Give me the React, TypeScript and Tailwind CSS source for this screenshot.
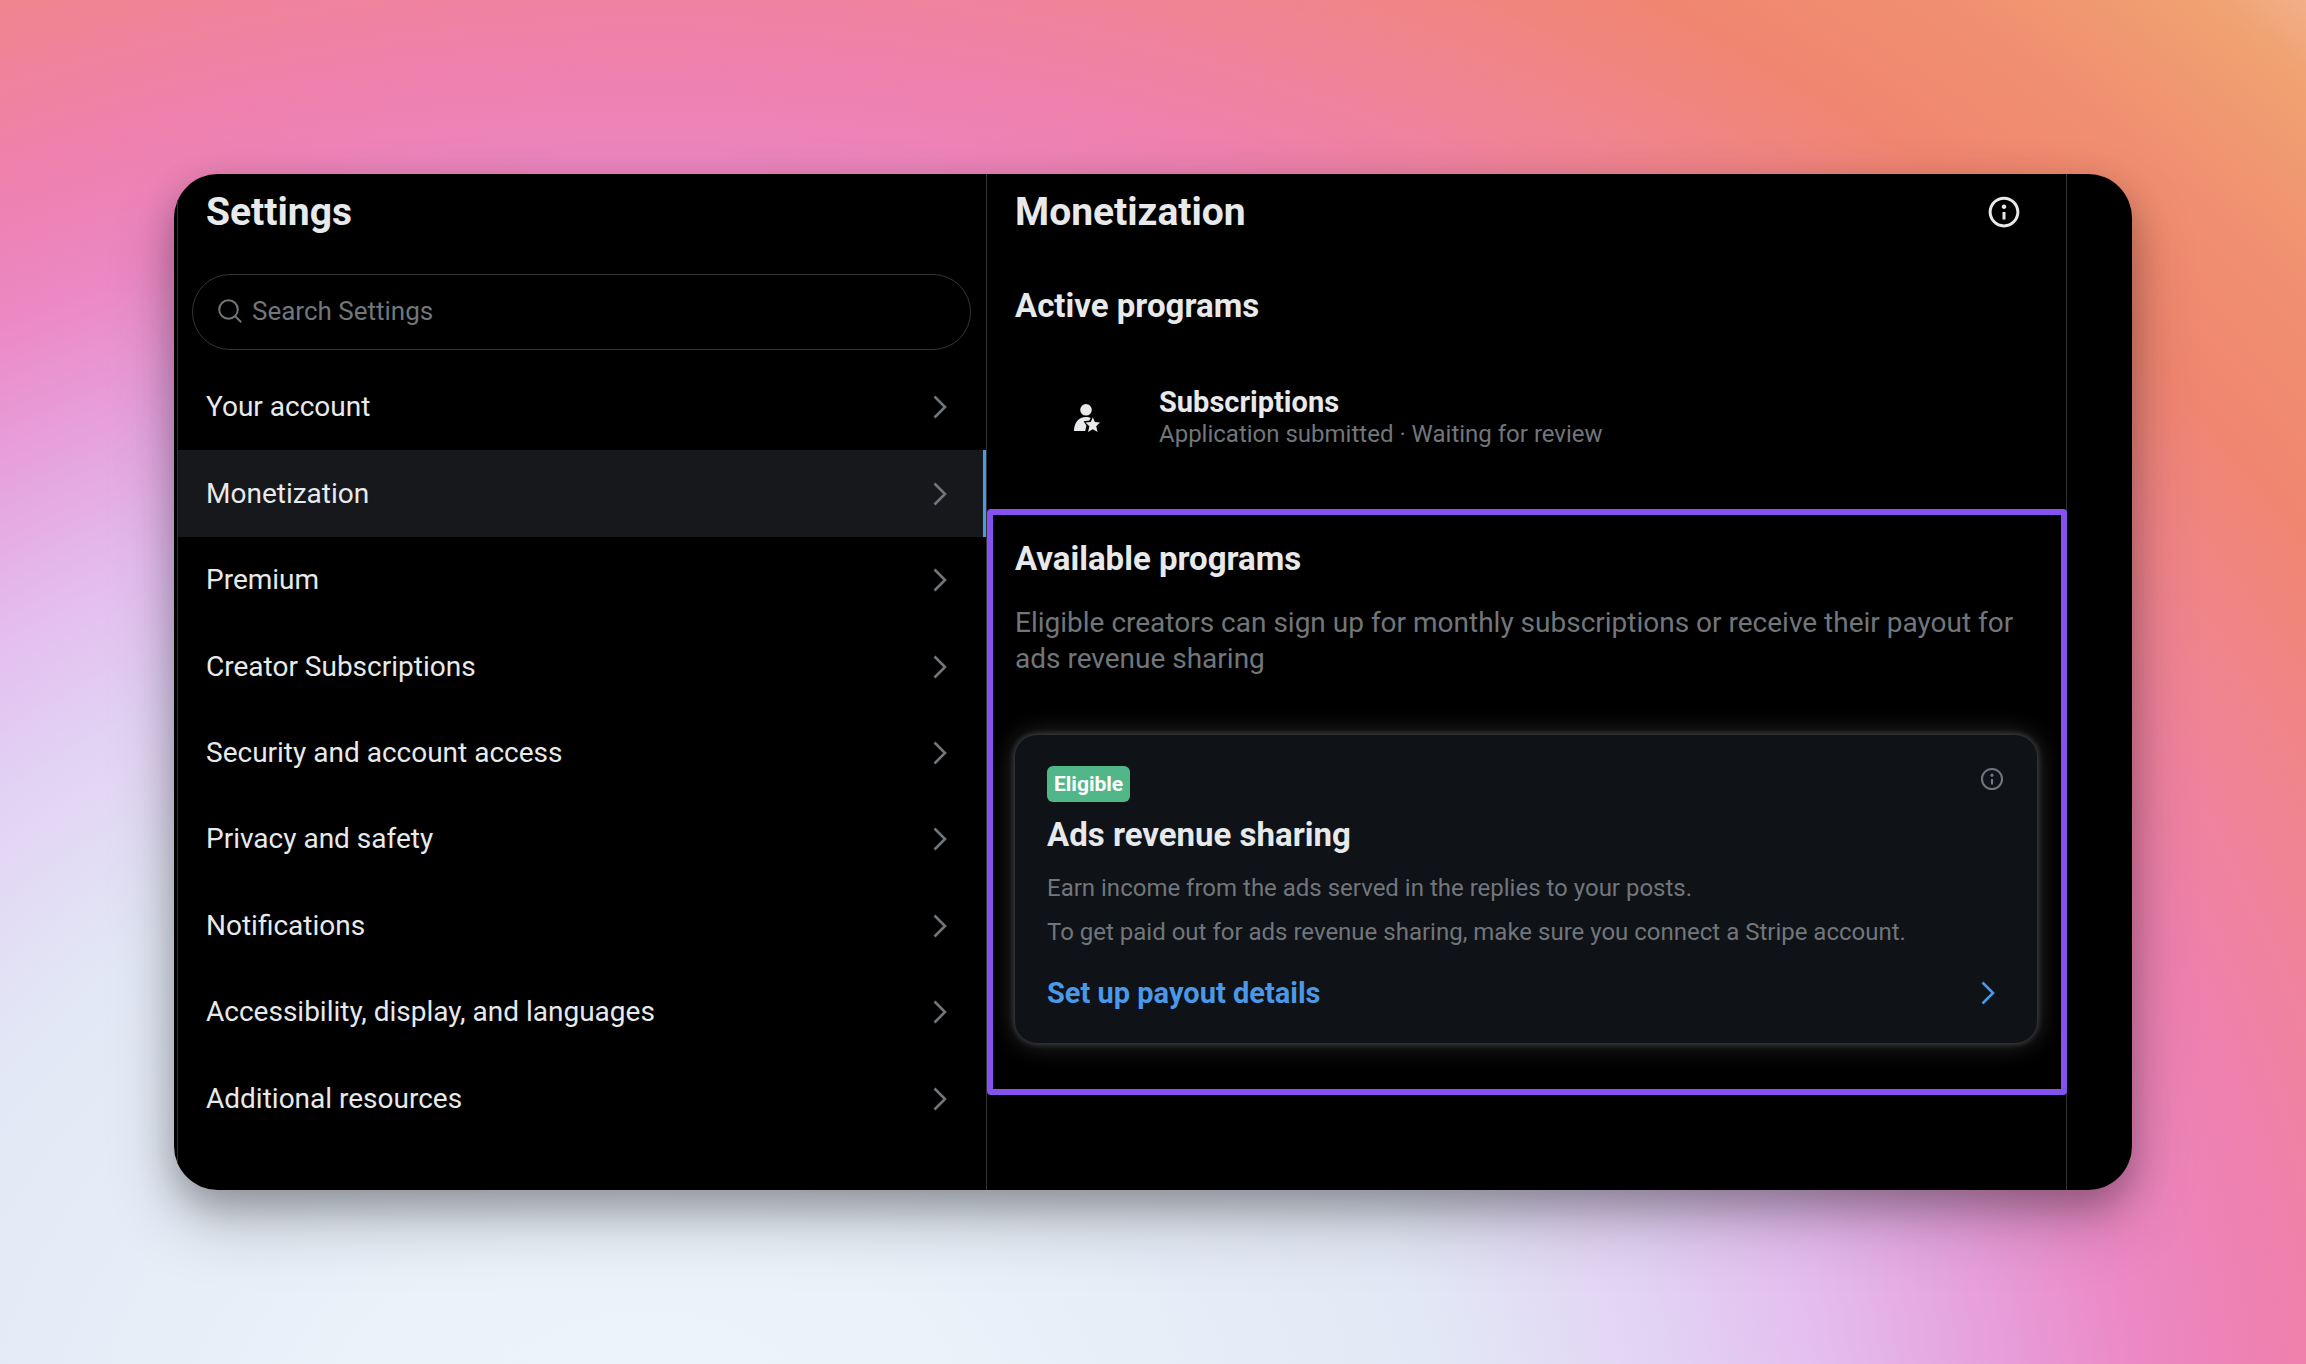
import React, { useState } from 'react';

interface IconProps {
  className?: string;
}

const settingsLinks = [
  'Your account',
  'Monetization',
  'Premium',
  'Creator Subscriptions',
  'Security and account access',
  'Privacy and safety',
  'Notifications',
  'Accessibility, display, and languages',
  'Additional resources',
];

const ChevronIcon: React.FC<IconProps> = ({ className }) => (
  <svg viewBox="0 0 14 24" fill="none" stroke="currentColor" strokeWidth="2.6" className={className} aria-hidden="true">
    <path d="M1.5 1.5 L12 12 L1.5 22.5" />
  </svg>
);

const InfoIcon: React.FC<IconProps> = ({ className }) => (
  <svg viewBox="0 0 24 24" fill="currentColor" className={className} aria-hidden="true">
    <path d="M13.5 8.5c0 .83-.67 1.5-1.5 1.5s-1.5-.67-1.5-1.5S11.17 7 12 7s1.5.67 1.5 1.5zM13 17v-5h-2v5h2zm-1 5.25c5.66 0 10.25-4.59 10.25-10.25S17.66 1.75 12 1.75 1.75 6.34 1.75 12 6.34 22.25 12 22.25zM20.25 12c0 4.56-3.69 8.25-8.25 8.25S3.75 16.56 3.75 12 7.44 3.75 12 3.75s8.25 3.69 8.25 8.25z" />
  </svg>
);

const SearchIcon: React.FC<IconProps> = ({ className }) => (
  <svg viewBox="0 0 24 24" fill="none" stroke="currentColor" strokeWidth="2" className={className} aria-hidden="true">
    <circle cx="10.5" cy="10.5" r="9.3" />
    <path d="M17.2 17.2 L23.2 23.2" />
  </svg>
);

const SubscriberIcon: React.FC<IconProps> = ({ className }) => (
  <svg viewBox="0 0 26 28" fill="currentColor" className={className} aria-hidden="true">
    <circle cx="12" cy="5.8" r="5.8" />
    <path d="M0 27 C0 19 4.5 13 12 13 C14 13 15.5 13.3 16.6 13.9 L15.4 16.4 L9.6 17.2 L12.4 21.6 L11.2 27 Z" />
    <path d="M18.8 13.2 L20.9 18 L26 18.6 L22.2 22.2 L23.6 28 L18.8 25.2 L14 28 L15.4 22.2 L11.4 18.6 L16.8 18 Z" />
  </svg>
);

const SettingsNav: React.FC = () => {
  const [search, setSearch] = useState('');
  const [active, setActive] = useState('Monetization');

  return (
    <aside className="w-[810px] shrink-0 border-x border-[#2f3336] pb-12">
      <h1 className="h-[100px] px-7 pt-[17px] text-[39px] leading-[42px] font-bold">Settings</h1>
      <label className="mr-[15px] ml-[14px] flex h-[76px] items-center gap-[10px] rounded-full border border-[#333639] px-[25px] pb-[2px] text-[#71767b]">
        <SearchIcon className="size-6" />
        <input
          type="text"
          aria-label="Search Settings"
          placeholder="Search Settings"
          value={search}
          onChange={e => setSearch(e.target.value)}
          className="min-w-0 flex-1 bg-transparent text-[26px] leading-9 text-[#e7e9ea] outline-none placeholder:text-[#71767b]"
        />
      </label>
      <nav className="mt-[14px] grid h-[778px] auto-rows-fr">
        {settingsLinks.map(link => (
          <a
            key={link}
            href="#"
            onClick={() => setActive(link)}
            className={`flex items-center justify-between pr-[39px] pl-7 text-[28px] leading-9 ${link === active ? 'bg-[#16181c] shadow-[inset_-3px_0_0_#4a99e9]' : ''}`}
          >
            {link}
            <ChevronIcon className="h-6 w-[14px] text-[#71767b]" />
          </a>
        ))}
      </nav>
    </aside>
  );
};

const AdsRevenueCard: React.FC = () => (
  <article className="mt-[58px] rounded-[22px] bg-[#0f1217] px-8 pt-[31px] pb-8 shadow-[0_0_27px_rgba(255,255,255,0.2),0_0_5px_2px_rgba(255,255,255,0.15)]">
    <div className="flex items-start justify-between">
      <span className="rounded-md bg-[#52b788] px-[7px] text-[21px] leading-9 font-bold text-white">Eligible</span>
      <button type="button" aria-label="About ads revenue sharing" className="text-[#71767b]">
        <InfoIcon className="size-[26px]" />
      </button>
    </div>
    <h3 className="mt-[13px] text-[33px] leading-10 font-bold">Ads revenue sharing</h3>
    <p className="mt-[17px] text-[24px] leading-8 text-[#71767b]">Earn income from the ads served in the replies to your posts.</p>
    <p className="mt-3 text-[24px] leading-8 text-[#71767b]">To get paid out for ads revenue sharing, make sure you connect a Stripe account.</p>
    <a href="#" className="mt-[27px] flex items-center justify-between pr-[10px] text-[29px] leading-9 font-bold text-[#4a99e9]">
      Set up payout details
      <ChevronIcon className="h-6 w-[14px]" />
    </a>
  </article>
);

const MonetizationPanel: React.FC = () => (
  <main className="min-w-0 flex-1">
    <header className="flex h-[76px] items-center justify-between pr-11 pl-7">
      <h2 className="text-[39px] leading-[42px] font-bold">Monetization</h2>
      <button type="button" aria-label="About monetization">
        <InfoIcon className="size-9" />
      </button>
    </header>

    <section className="h-[259px] px-7 pt-9">
      <h3 className="text-[33px] leading-10 font-bold">Active programs</h3>
      <div className="mt-[60px] flex items-center">
        <SubscriberIcon className="mx-[59px] h-7 w-[26px]" />
        <div>
          <h4 className="text-[29px] leading-8 font-bold">Subscriptions</h4>
          <p className="text-[24px] leading-8 text-[#71767b]">Application submitted · Waiting for review</p>
        </div>
      </div>
    </section>

    {/* highlighted section, its frame covers the column's right rule */}
    <section className="-mr-px rounded-sm border-6 border-[#8552f0] pt-6 pr-6 pb-[46px] pl-[22px]">
      <h3 className="text-[33px] leading-10 font-bold">Available programs</h3>
      <p className="mt-[26px] text-[28px] leading-9 text-[#71767b]">
        Eligible creators can sign up for monthly subscriptions or receive their payout for ads revenue sharing
      </p>
      <AdsRevenueCard />
    </section>
  </main>
);

const App: React.FC = () => (
  <div className="min-h-screen bg-[radial-gradient(70%_103%_at_28%_110%,#ebf3fb_0%,#eaf2fa_20%,#e2e8f5_50%,#e2d2f4_64%,#e4bcee_74%,#e6a2de_83%,#ec88c4_93%,#ee80ae_102%,#f08490_113%,#f08670_124%,#f09070_134%,#f0a272_144%,#f2b490_150%)] p-[174px] font-[Roboto,sans-serif] text-[#e7e9ea]">
    <div className="flex overflow-hidden rounded-[44px] bg-black pr-[65px] pl-[3px] shadow-[0_16px_36px_rgba(0,0,0,0.25),0_32px_70px_rgba(0,0,0,0.2)]">
      <SettingsNav />
      <div className="flex min-w-0 flex-1 border-r border-[#2f3336]">
        <MonetizationPanel />
      </div>
    </div>
  </div>
);

export default App;
